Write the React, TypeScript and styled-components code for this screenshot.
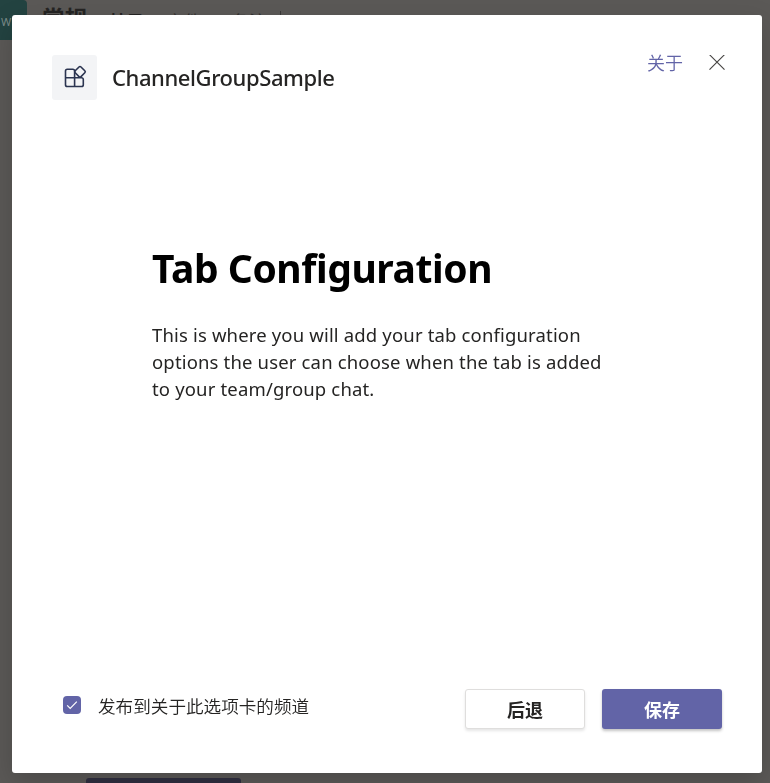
import React from 'react';
import styled, { createGlobalStyle } from 'styled-components';

const GlobalStyle = createGlobalStyle`
  *, *::before, *::after { box-sizing: border-box; }
  html, body, #root { margin: 0; height: 100%; overflow: hidden; }
  body { font-family: "Noto Sans", "Noto Sans CJK SC", sans-serif; }
  h1, h2, p { margin: 0; }
  button { font-family: inherit; padding: 0; cursor: pointer; }
`;

const Page = styled.div`
  height: 783px;
  display: flex;
  flex-direction: column;
  justify-content: space-between;
  background: #5b5957;
  overflow: hidden;
`;

const ChannelBar = styled.header`
  display: flex;
  height: 40px;
  white-space: nowrap;
  overflow: hidden;
`;

const TeamAvatar = styled.div`
  width: 27px;
  height: 40px;
  padding: 14px 0 0 1px;
  border-top-right-radius: 4px;
  background: #234341;
  color: #7b8b89;
  font-size: 11px;
  line-height: 16px;
`;

const ChannelName = styled.span`
  margin-left: 15px;
  padding-top: 7px;
  font-size: 22.5px;
  font-weight: 700;
  line-height: 24px;
  color: #252423;
`;

const ChannelTab = styled.span<{ $active?: boolean; $gap: number }>`
  margin-left: ${(p) => p.$gap}px;
  padding-top: 11px;
  font-size: 17.6px;
  line-height: 20px;
  font-weight: ${(p) => (p.$active ? 700 : 400)};
  color: ${(p) => (p.$active ? '#252423' : '#343230')};
`;

const TabDivider = styled.span`
  width: 1px;
  height: 20px;
  margin: 11px 0 0 13px;
  background: #3b3938;
`;

const PageAction = styled.div`
  width: 155px;
  height: 5px;
  margin-left: 86px;
  border-radius: 3px 3px 0 0;
  background: #302f40;
`;

const Overlay = styled.div`
  position: fixed;
  inset: 0;
  padding: 15px 8px 10px 12px;
`;

const Dialog = styled.section`
  display: flex;
  flex-direction: column;
  width: 750px;
  height: 758px;
  border-radius: 3px;
  background: #fff;
  box-shadow: 0 10px 28px rgba(0, 0, 0, 0.18);
`;

const DialogHeader = styled.header`
  display: flex;
  height: 85px;
  padding: 40px 36px 0 40px;
`;

const AppTile = styled.div`
  display: flex;
  justify-content: center;
  width: 45px;
  height: 45px;
  padding-top: 10px;
  border-radius: 3px;
  background: #f3f4f6;
`;

const AppName = styled.h2`
  margin-left: 15px;
  font-size: 22px;
  font-weight: 500;
  line-height: 45px;
  letter-spacing: -0.42px;
  color: #252423;
`;

const AboutLink = styled.button`
  margin: -1px 0 0 auto;
  height: 18px;
  border: 0;
  background: none;
  color: #6264a7;
  font-size: 18px;
  font-weight: 350;
  line-height: 18px;
`;

const CloseButton = styled.button`
  display: flex;
  width: 18px;
  height: 18px;
  margin-left: 25px;
  border: 0;
  background: none;
`;

const Content = styled.main`
  flex: 1;
  padding: 140px 140px 0;
`;

const Heading = styled.h1`
  font-size: 39px;
  font-weight: 700;
  line-height: 56px;
  letter-spacing: -0.43px;
  color: #000;
  white-space: nowrap;
`;

const Description = styled.p`
  margin-top: 25px;
  width: 460px;
  font-size: 18.5px;
  line-height: 27px;
  letter-spacing: 0.16px;
  color: #252423;
`;

const DialogFooter = styled.footer`
  display: flex;
  align-items: flex-start;
  height: 84px;
  padding: 0 40px 0 51px;
`;

const PublishOption = styled.label`
  display: flex;
  align-items: center;
  gap: 17px;
  height: 32px;
  margin-right: auto;
  color: #252423;
  font-size: 17.6px;
  font-weight: 350;
`;

const CheckMark = styled.span`
  display: grid;
  place-items: center;
  width: 18px;
  height: 18px;
  border-radius: 4px;
  background: #6264a7;
`;

const ActionButton = styled.button<{ $primary?: boolean }>`
  width: 120px;
  height: 40px;
  margin-left: ${(p) => (p.$primary ? '17px' : '0')};
  padding-bottom: 1px;
  border: ${(p) => (p.$primary ? '0' : '1px solid #dfdedd')};
  border-radius: 3px;
  background: ${(p) => (p.$primary ? '#6264a7' : '#fff')};
  color: ${(p) => (p.$primary ? '#fff' : '#252423')};
  box-shadow: 0 2px 3px rgba(0, 0, 0, ${(p) => (p.$primary ? 0.24 : 0.1)});
  font-size: 18px;
  font-weight: 700;
`;

const AppIcon = () => (
  <svg width="24" height="24" viewBox="0 0 24 24" fill="none" stroke="#2b3450" strokeWidth="1.6">
    <path d="M11.6 21.5H4.3A1.8 1.8 0 0 1 2.5 19.7V6.1A1.8 1.8 0 0 1 4.3 4.3H9.8A1.8 1.8 0 0 1 11.6 6.1V21.5ZM2.5 12.8H18.5A1.8 1.8 0 0 1 20.3 14.6V19.7A1.8 1.8 0 0 1 18.5 21.5H11.6" />
    <path d="M16 2L12.2 5.8Q11.2 6.8 12.2 7.8L16 11.6Q17 12.6 18 11.6L21.8 7.8Q22.8 6.8 21.8 5.8L18 2Q17 1 16 2Z" />
  </svg>
);

export default function App() {
  return (
    <>
      <GlobalStyle />
      <Page>
        <ChannelBar>
          <TeamAvatar>W</TeamAvatar>
          <ChannelName>常规</ChannelName>
          <ChannelTab $active $gap={22}>帖子</ChannelTab>
          <ChannelTab $gap={22}>文件</ChannelTab>
          <ChannelTab $gap={30}>备注</ChannelTab>
          <TabDivider />
        </ChannelBar>
        <PageAction />
      </Page>
      <Overlay>
        <Dialog role="dialog" aria-label="ChannelGroupSample">
          <DialogHeader>
            <AppTile><AppIcon /></AppTile>
            <AppName>ChannelGroupSample</AppName>
            <AboutLink>关于</AboutLink>
            <CloseButton aria-label="关闭">
              <svg width="18" height="18" viewBox="0 0 18 18" fill="none" stroke="#484644" strokeWidth="1.2">
                <path d="M1.5 -0.3L16.5 14.7M16.5 -0.3L1.5 14.7" overflow="visible" />
              </svg>
            </CloseButton>
          </DialogHeader>
          <Content>
            <Heading>Tab Configuration</Heading>
            <Description>
              This is where you will add your tab configuration options the user can choose when the tab is added to your team/group chat.
            </Description>
          </Content>
          <DialogFooter>
            <PublishOption>
              <CheckMark>
                <svg width="12" height="12" viewBox="0 0 12 12" fill="none" stroke="#fff" strokeWidth="1.2">
                  <path d="M1.2 6.3L4.2 9.3L10.8 2.7" />
                </svg>
              </CheckMark>
              发布到关于此选项卡的频道
            </PublishOption>
            <ActionButton>后退</ActionButton>
            <ActionButton $primary>保存</ActionButton>
          </DialogFooter>
        </Dialog>
      </Overlay>
    </>
  );
}
